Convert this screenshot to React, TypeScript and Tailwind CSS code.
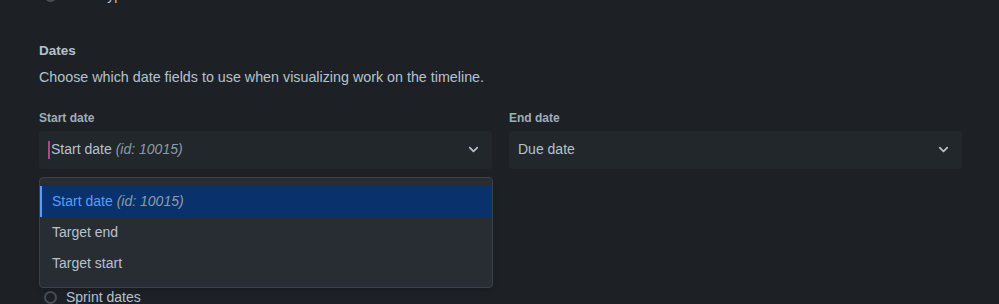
import { ChevronDown } from 'lucide-react';

const font = { fontFamily: '"Liberation Sans", Arial, sans-serif' };

function Select({ children }: { children: React.ReactNode }) {
  return (
    <div className="flex h-[38px] items-center justify-between rounded-[3px] bg-[#22272b] pl-[9px] pr-[11px] text-[14px] text-[#b6c2cf]">
      <div className="flex items-center">{children}</div>
      <ChevronDown className="h-[15px] w-[15px] text-[#b6c2cf]" strokeWidth={2.75} />
    </div>
  );
}

function Radio({ label }: { label: string }) {
  return (
    <div className="flex h-[24px] items-center gap-[9px] pl-[5px] text-[14px] text-[#b6c2cf]">
      <span className="h-[13px] w-[13px] rounded-full border-2 border-[#454f59]" />
      <span>{label}</span>
    </div>
  );
}

export default function App() {
  const options = ['Target end', 'Target start'];

  return (
    <div className="h-[304px] w-full overflow-hidden bg-[#1d2125]" style={font}>
      <div className="pl-[39px] pr-[37px]">
        {/* previous section, cut off at the top */}
        <div className="-mt-[17px]">
          <Radio label="Issue type" />
        </div>

        <h3 className="mt-[34px] text-[13.5px] font-bold text-[#b6c2cf]">Dates</h3>
        <p className="mt-[6px] text-[14.3px] text-[#b6c2cf]">
          Choose which date fields to use when visualizing work on the timeline.
        </p>

        <div className="mt-[20px] grid grid-cols-2 gap-[17px]">
          <div>
            <div className="mb-[4px] text-[12px] font-bold text-[#9fadbc]">Start date</div>
            <div className="relative">
              <Select>
                <span className="mr-[1px] h-[18px] w-[2px] bg-[#ae4787]" />
                <span>Start date</span>
                <span className="ml-[4px] italic text-[#8c9bab]">(id: 10015)</span>
              </Select>

              <div className="absolute left-0 right-[-1px] top-[46px] z-10 rounded-[4px] border border-[#3a4148] bg-[#282d33] py-[8px] shadow-md">
                <div className="flex h-[31px] items-center border-l-2 border-[#579dff] bg-[#09326c] pl-[10px] text-[14px] text-[#579dff]">
                  Start date
                  <span className="ml-[4px] italic text-[#8c9bab]">(id: 10015)</span>
                </div>
                {options.map(o => (
                  <div key={o} className="flex h-[31px] items-center pl-[12px] text-[14px] text-[#b6c2cf]">
                    {o}
                  </div>
                ))}
              </div>
            </div>
          </div>

          <div>
            <div className="mb-[4px] text-[12px] font-bold text-[#9fadbc]">End date</div>
            <Select>
              <span>Due date</span>
            </Select>
          </div>
        </div>

        {/* radio group, mostly hidden behind the open menu */}
        <div className="mt-[21px] flex flex-col gap-[8px]">
          <Radio label="Custom dates" />
          <Radio label="Issue dates" />
          <Radio label="Target dates" />
          <Radio label="Sprint dates" />
        </div>
      </div>
    </div>
  );
}
